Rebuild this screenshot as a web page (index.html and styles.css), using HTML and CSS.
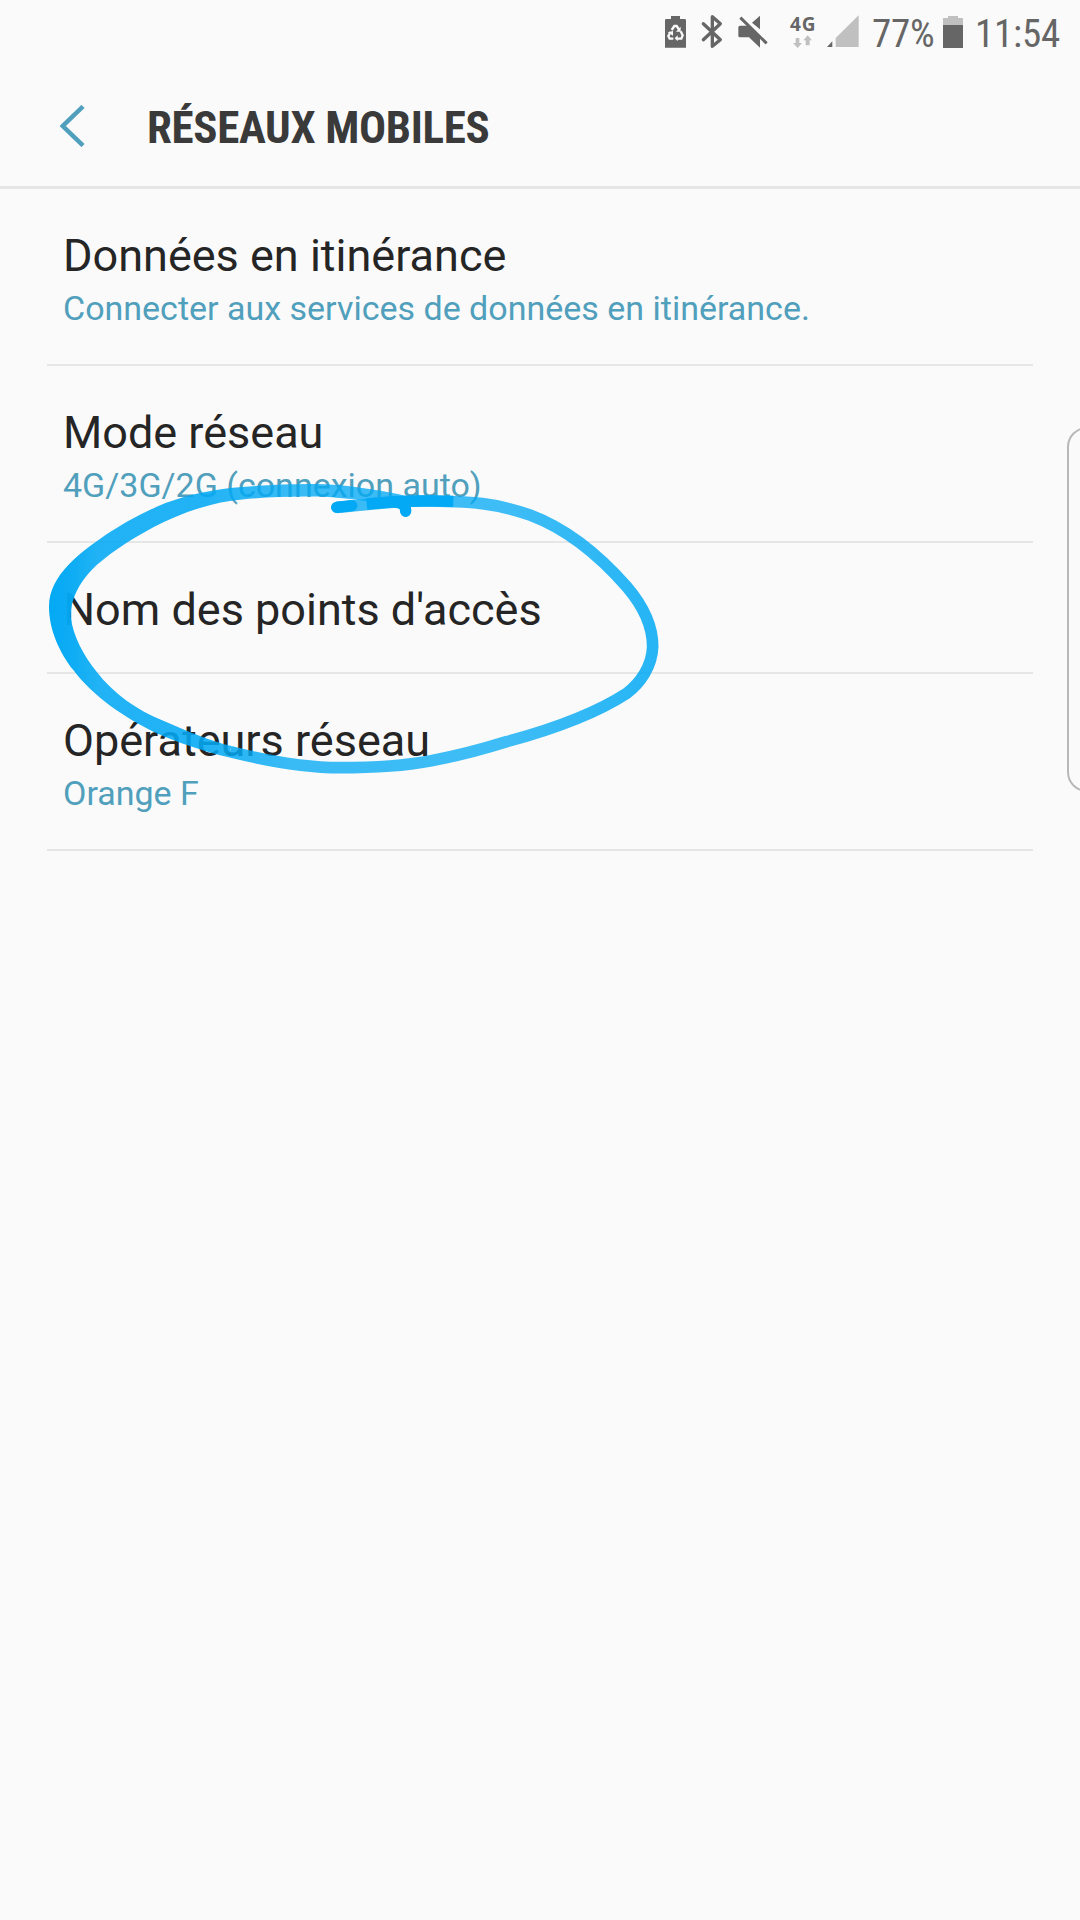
FILE: index.html
```html
<!DOCTYPE html>
<html lang="fr">
<head>
<meta charset="utf-8">
<title>Réseaux mobiles</title>
<link rel="stylesheet" href="styles.css">
</head>
<body>
<div class="status-bar">
  <svg class="status-icons" width="220" height="70" viewBox="0 0 660 210" aria-hidden="true">
    <path class="dark" d="M63 57V48H90V57H104Q108 57 108 61V143H45V61Q45 57 49 57Z"/>
    <g class="recycle">
      <path d="M65 90L73 78H80L88 90M92 94L98 106L94 116H81M70 116H59L55 108L62 96"/>
      <path class="tip" d="M92 80V95H78ZM83 106V124L74 115ZM53 97L69 93V107Z"/>
    </g>
    <path class="line" d="M160 71L211 119L187 139V50L211 71L160 119" stroke-width="10"/>
    <path class="dark" d="M265 82Q265 77 270 77H296L330 110V143L297 112H270Q265 112 265 107ZM306 68L330 47V88Z"/>
    <path class="line butt" d="M271 53L350 130" stroke-width="9"/>
    <path class="light" d="M437 114H448V129H456L443 144L429 129H437ZM467 136V121H460L473 106L486 121H479V136Z"/>
    <path class="dark" d="M531 141L547 124V141Z"/>
    <path class="light" d="M557 141V114L626 46V141Z"/>
  </svg>
  <span class="network">4G</span>
  <span class="level">77%</span>
  <svg class="battery" width="20" height="32" viewBox="0 0 20 32" aria-hidden="true">
    <path class="light" d="M5 0H15V2H20V9H0V2H5Z"/>
    <path class="dark" d="M0 9H20V32H0Z"/>
  </svg>
  <span class="clock">11:54</span>
</div>
<header class="header">
  <svg class="back" width="26" height="42" viewBox="0 0 26 42" aria-hidden="true"><path d="M23 1.5L2.8 21L23 40.5"/></svg>
  <h1 class="heading">RÉSEAUX MOBILES</h1>
</header>
<main class="list">
  <div class="row"><div class="title">Données en itinérance</div><div class="summary">Connecter aux services de données en itinérance.</div></div>
  <div class="row"><div class="title">Mode réseau</div><div class="summary">4G/3G/2G (connexion auto)</div></div>
  <div class="row single"><div class="title">Nom des points d'accès</div></div>
  <div class="row"><div class="title">Opérateurs réseau</div><div class="summary">Orange F</div></div>
</main>
<div class="edge-handle"></div>
<svg class="marker" width="650" height="400" viewBox="0 0 1950 1200" aria-hidden="true">
  <defs>
    <linearGradient id="ink" gradientUnits="userSpaceOnUse" x1="57" y1="0" x2="1890" y2="0">
      <stop offset="0" stop-color="#03a9f4"/>
      <stop offset=".035" stop-color="#03a9f4" stop-opacity=".96"/>
      <stop offset=".08" stop-color="#03a9f4" stop-opacity=".88"/>
      <stop offset=".25" stop-color="#03a9f4" stop-opacity=".88"/>
      <stop offset=".4" stop-color="#03a9f4" stop-opacity=".78"/>
      <stop offset=".75" stop-color="#03a9f4" stop-opacity=".76"/>
      <stop offset="1" stop-color="#03a9f4" stop-opacity=".86"/>
    </linearGradient>
  </defs>
  <path class="thin" d="M920 322C1000 316 1060 305 1170 303C1330 303 1400 310 1500 345C1620 390 1720 480 1790 560C1850 630 1868 690 1868 740C1866 800 1830 850 1790 880C1690 945 1560 990 1430 1025C1350 1050 1280 1068 1200 1083C1110 1100 1000 1103 930 1103C840 1103 720 1085 600 1055"/>
  <path class="thick" d="M596 1072C530 1056 440 1027 370 995C280 950 190 890 130 810C90 760 57 690 57 620C57 570 82 530 115 495C170 437 280 365 380 320C450 290 530 272 600 264C700 254 850 248 930 256C1010 264 1070 275 1125 287C1140 292 1143 300 1143 334A16 16 0 0 1 1111 334C1111 322 1100 320 1085 317C1030 306 980 298 930 294C850 285 690 290 600 303C520 315 440 345 370 382C290 425 225 470 185 510C148 550 122 595 122 650C130 710 160 765 200 815C250 880 320 930 400 962C470 993 540 1022 604 1038Z"/>
  <path class="blob" d="M920 322L965 317"/>
  <path class="overlap" d="M1010 312Q1090 303 1170 303Q1220 302 1270 304"/>
  <path class="tail" d="M1100 307Q1127 310 1127 334"/>
</svg>
</body>
</html>
```
FILE: styles.css
```css
* { box-sizing: border-box; }
body {
  position: relative;
  width: 1080px;
  height: 1920px;
  margin: 0;
  overflow: hidden;
  background: #fafafa;
  color: #252525;
  font-family: Roboto, sans-serif;
}
svg { display: block; flex: none; }
.dark { fill: #666; }
.light { fill: #c0c0c0; }
.line { fill: none; stroke: #666; stroke-linejoin: round; stroke-linecap: round; }
.butt { stroke-linecap: butt; }
.recycle { fill: none; stroke: #fafafa; stroke-width: 7; }
.tip { fill: #fafafa; stroke: none; }
.status-bar {
  position: relative;
  display: flex;
  height: 68px;
  padding-left: 650px;
  color: #666;
}
.network {
  position: absolute;
  left: 790px;
  top: 11px;
  font: 700 19px/27px "Open Sans", sans-serif;
  letter-spacing: 1px;
}
.level, .clock {
  font-family: "Roboto Condensed", Roboto, sans-serif;
  font-stretch: 75%;
  font-size: 39px;
  line-height: 46px;
  margin-top: 11px;
  white-space: nowrap;
}
.level { width: 70px; margin-left: 2px; letter-spacing: -.2px; }
.battery { margin: 16px 0 0 1px; }
.clock { margin-left: 12px; letter-spacing: -.2px; }
.header {
  display: flex;
  height: 121px;
  border-bottom: 3px solid #e6e6e6;
  padding-left: 60px;
}
.back { margin-top: 37px; fill: none; stroke: #4f9fbd; stroke-width: 4.5; }
.heading {
  margin: 33px 0 0 61px;
  font-family: "Roboto Condensed", Roboto, sans-serif;
  font-stretch: 75%;
  font-size: 45px;
  line-height: 54px;
  letter-spacing: -.35px;
  color: #3a3a3a;
  white-space: nowrap;
}
.list { padding: 0 47px; }
.row {
  height: 177px;
  padding: 40px 16px 0;
  border-bottom: 2px solid #e6e6e6;
  white-space: nowrap;
}
.single { height: 131px; }
.title { font-size: 45px; line-height: 53px; }
.summary { margin-top: 6px; font-size: 34px; line-height: 40px; color: #509fbc; }
.edge-handle {
  position: absolute;
  left: 1067px;
  top: 427px;
  width: 40px;
  height: 365px;
  border: 2px solid #b8b8b8;
  border-radius: 20px;
}
.marker { position: absolute; left: 30px; top: 400px; }
.thin { fill: none; stroke: url(#ink); stroke-width: 35; }
.thick { fill: url(#ink); }
.blob, .overlap, .tail { fill: none; stroke: #03a9f4; stroke-width: 34; }
.blob, .tail { stroke-linecap: round; }
```
